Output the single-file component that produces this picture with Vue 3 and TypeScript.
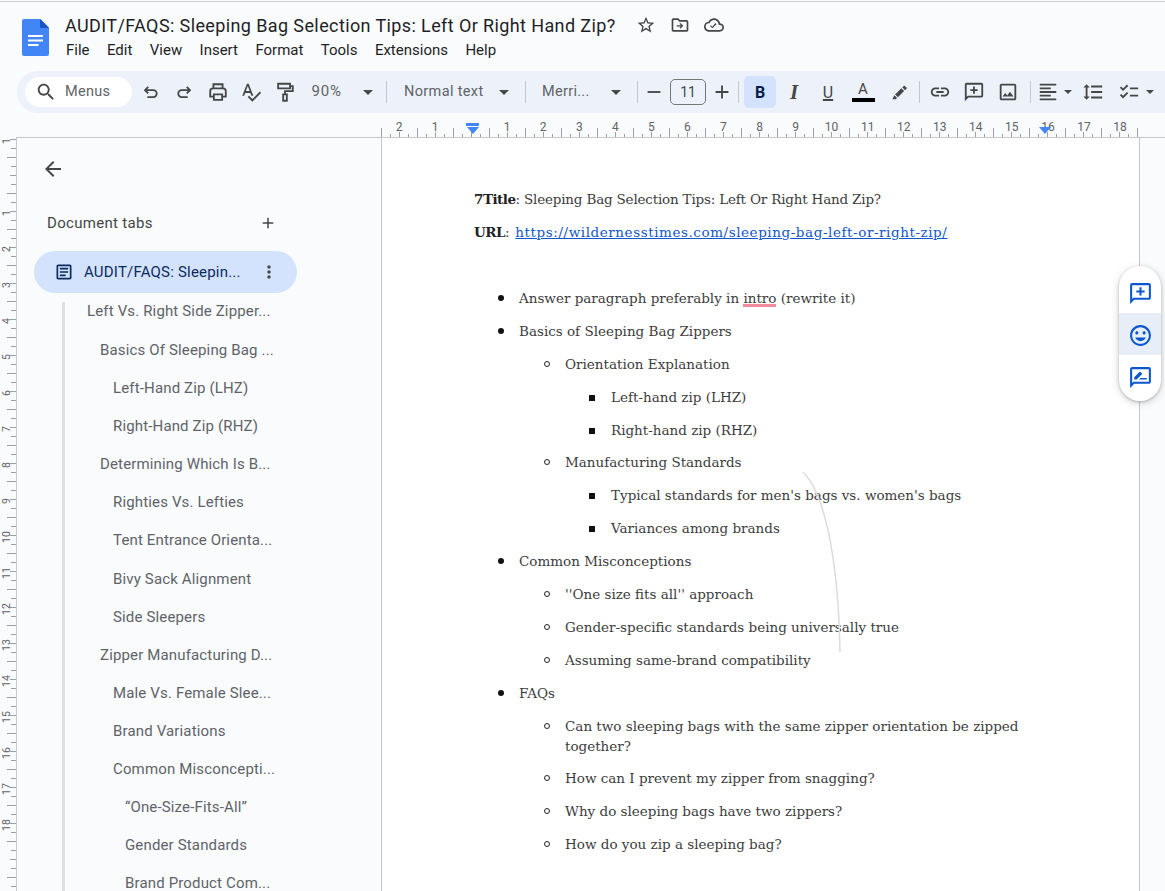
<script setup lang="ts">
interface TabItem { label: string; level: number }

const menus: string[] = ['File', 'Edit', 'View', 'Insert', 'Format', 'Tools', 'Extensions', 'Help']

const tabs: TabItem[] = [
  { label: 'Left Vs. Right Side Zipper...', level: 0 },
  { label: 'Basics Of Sleeping Bag ...', level: 1 },
  { label: 'Left-Hand Zip (LHZ)', level: 2 },
  { label: 'Right-Hand Zip (RHZ)', level: 2 },
  { label: 'Determining Which Is B...', level: 1 },
  { label: 'Righties Vs. Lefties', level: 2 },
  { label: 'Tent Entrance Orienta...', level: 2 },
  { label: 'Bivy Sack Alignment', level: 2 },
  { label: 'Side Sleepers', level: 2 },
  { label: 'Zipper Manufacturing D...', level: 1 },
  { label: 'Male Vs. Female Slee...', level: 2 },
  { label: 'Brand Variations', level: 2 },
  { label: 'Common Misconcepti...', level: 2 },
  { label: '“One-Size-Fits-All”', level: 3 },
  { label: 'Gender Standards', level: 3 },
  { label: 'Brand Product Com...', level: 3 },
]

const outline: { text: string; level: number }[] = [
  { text: 'Basics of Sleeping Bag Zippers', level: 1 },
  { text: 'Orientation Explanation', level: 2 },
  { text: 'Left-hand zip (LHZ)', level: 3 },
  { text: 'Right-hand zip (RHZ)', level: 3 },
  { text: 'Manufacturing Standards', level: 2 },
  { text: "Typical standards for men's bags vs. women's bags", level: 3 },
  { text: 'Variances among brands', level: 3 },
  { text: 'Common Misconceptions', level: 1 },
  { text: "''One size fits all'' approach", level: 2 },
  { text: 'Gender-specific standards being universally true', level: 2 },
  { text: 'Assuming same-brand compatibility', level: 2 },
  { text: 'FAQs', level: 1 },
  { text: 'Can two sleeping bags with the same zipper orientation be zipped together?', level: 2 },
  { text: 'How can I prevent my zipper from snagging?', level: 2 },
  { text: 'Why do sleeping bags have two zippers?', level: 2 },
  { text: 'How do you zip a sleeping bag?', level: 2 },
]

const hTicks = Array.from({ length: 85 }, (_, i) => ({
  x: 0.5 + i * 9,
  h: i % 4 === 0 ? 9 : i % 4 === 2 ? 5 : 3,
}))
const hNums = Array.from({ length: 21 }, (_, i) => ({ n: Math.abs(i - 2), x: 18 + i * 36.05 })).filter(
  (v) => v.n !== 0,
)
const vTicks = Array.from({ length: 90 }, (_, i) => ({
  y: 1.5 + i * 9,
  w: i % 4 === 2 ? 9 : i % 4 === 0 ? 6 : 5,
}))
const vNums = Array.from({ length: 20 }, (_, i) => ({ n: Math.abs(i - 1), y: 3 + i * 36 })).filter(
  (v) => v.n !== 0,
)
</script>

<template>
  <div class="app">
    <header class="head">
      <svg class="logo" viewBox="0 0 27 37" width="27" height="37">
        <path d="M2 0h16.500l8.500 8.500v26.500a2 2 0 0 1-2 2h-23a2 2 0 0 1-2-2v-33a2 2 0 0 1 2-2z" fill="#4285f4" />
        <path d="M18 0l9 9h-9z" fill="#1a56c4" />
        <path d="M6 16h15v2H6zM6 20.500h15v2H6zM6 25h10.500v2H6z" fill="#fff" />
      </svg>
      <div class="head-text">
        <div class="title-row">
          <span class="doc-title">AUDIT/FAQS: Sleeping Bag Selection Tips: Left Or Right Hand Zip?</span>
          <svg class="ti" viewBox="0 0 24 24"><path d="M22 9.240l-7.190-.62L12 2 9.190 8.630 2 9.240l5.460 4.730L5.820 21 12 17.270 18.180 21l-1.630-7.030L22 9.240zM12 15.400l-3.760 2.270 1-4.280-3.320-2.880 4.380-.38L12 6.100l1.710 4.040 4.380.38-3.320 2.880 1 4.280L12 15.400z" /></svg>
          <svg class="ti" viewBox="0 0 24 24"><path d="M20 6h-8l-2-2H4c-1.100 0-2 .9-2 2v12c0 1.100.9 2 2 2h16c1.100 0 2-.9 2-2V8c0-1.100-.9-2-2-2zm0 12H4V6h5.170l2 2H20v10z" /><path d="M12.500 9.500l-1.100 1.100 1.600 1.600H8v1.600h5l-1.600 1.600 1.100 1.100 3.500-3.500z" /></svg>
          <svg class="ti" viewBox="0 0 24 24"><path d="M19.350 10.040C18.670 6.590 15.640 4 12 4 9.110 4 6.600 5.640 5.350 8.040 2.340 8.360 0 10.910 0 14c0 3.310 2.690 6 6 6h13c2.760 0 5-2.240 5-5 0-2.640-2.050-4.780-4.650-4.960zM19 18H6c-2.210 0-4-1.790-4-4 0-2.050 1.530-3.760 3.560-3.970l1.070-.11.5-.95C8.080 7.140 9.940 6 12 6c2.620 0 4.880 1.860 5.390 4.430l.3 1.500 1.530.11c1.560.1 2.780 1.410 2.780 2.960 0 1.650-1.350 3-3 3zm-9-3.820l-2.090-2.090L7.500 13.500 10 16l5.010-5.010-1.410-1.410z" /></svg>
        </div>
        <nav class="menu">
          <span v-for="m in menus" :key="m">{{ m }}</span>
        </nav>
      </div>
    </header>

    <div class="toolbar">
      <div class="pill">
        <svg class="ic" viewBox="0 0 24 24"><path d="M15.500 14h-.79l-.28-.27C15.410 12.590 16 11.110 16 9.500 16 5.910 13.090 3 9.500 3S3 5.910 3 9.500 5.910 16 9.500 16c1.610 0 3.090-.59 4.230-1.570l.27.28v.79l5 4.990L20.490 19l-4.990-5zm-6 0C7.010 14 5 11.990 5 9.500S7.010 5 9.500 5 14 7.010 14 9.500 11.990 14 9.500 14z" /></svg>
        <span>Menus</span>
      </div>
      <button class="tb hist first"><svg class="ic stroked" viewBox="0 0 24 24"><path d="M9 6.500L5.500 10 9 13.500M5.500 10h9a3.750 3.750 0 0 1 0 7.500H8" /></svg></button>
      <button class="tb hist"><svg class="ic stroked" viewBox="0 0 24 24"><path d="M15 6.500l3.500 3.500-3.500 3.500M18.500 10h-9a3.750 3.750 0 0 0 0 7.500H16" /></svg></button>
      <button class="tb hist"><svg class="ic stroked" viewBox="0 0 24 24"><path d="M7 8V3.500h10V8M7 17H3.500v-6a3 3 0 0 1 3-3h11a3 3 0 0 1 3 3v6H17M7.500 14.500h9v6h-9z" /></svg></button>
      <button class="tb hist"><svg class="ic" viewBox="0 0 24 24"><path d="M12.450 16h2.090L9.430 3H7.570L2.460 16h2.090l1.120-3h5.640l1.140 3zm-6.020-5L8.500 5.480 10.570 11H6.430zm15.160.59l-8.090 8.090L9.830 16l-1.410 1.410 5.090 5.090L23 13l-1.410-1.410z" /></svg></button>
      <button class="tb hist"><svg class="ic stroked" viewBox="0 0 24 24"><path d="M4.500 3h13v5h-13zM17.500 5.500h3v5.500H12v3.500M10 14.500h4v7h-4z" /></svg></button>
      <span class="drop zoom"><span>90%</span><i class="caret"></i></span>
      <span class="sep"></span>
      <span class="drop style"><span>Normal text</span><i class="caret"></i></span>
      <span class="sep"></span>
      <span class="drop font"><span>Merri...</span><i class="caret"></i></span>
      <span class="sep"></span>
      <button class="sz"><svg class="ic" viewBox="0 0 24 24"><path d="M5 11h14v2H5z" /></svg></button>
      <span class="size-box">11</span>
      <button class="sz"><svg class="ic" viewBox="0 0 24 24"><path d="M19 13h-6v6h-2v-6H5v-2h6V5h2v6h6v2z" /></svg></button>
      <span class="sep tight"></span>
      <button class="bold">B</button>
      <button class="fmt italic">I</button>
      <button class="fmt under"><span>U</span></button>
      <button class="fmt color"><span class="color-a">A</span><i class="color-bar"></i></button>
      <button class="tb pen"><svg class="ic pen-ic" viewBox="0 0 24 24"><path d="M6.500 14.500l7.800-7.800 3.500 3.500-7.800 7.800-3.500-3.500zM15.500 5.500l1.800-1.800a1 1 0 0 1 1.400 0l2.100 2.100a1 1 0 0 1 0 1.400L19 9l-3.500-3.500zM5.500 15.500l3.500 3.500-2 1.500H3z" /></svg></button>
      <span class="sep after-pen"></span>
      <button class="tb link-btn"><svg class="ic" viewBox="0 0 24 24"><path d="M3.900 12c0-1.710 1.390-3.100 3.100-3.100h4V7H7c-2.760 0-5 2.240-5 5s2.240 5 5 5h4v-1.900H7c-1.710 0-3.100-1.390-3.100-3.100zM8 13h8v-2H8v2zm9-6h-4v1.900h4c1.710 0 3.100 1.390 3.100 3.100s-1.390 3.100-3.100 3.100h-4V17h4c2.760 0 5-2.240 5-5s-2.240-5-5-5z" /></svg></button>
      <button class="tb"><svg class="ic" viewBox="0 0 24 24"><path d="M20 2H4c-1.100 0-2 .9-2 2v18l4-4h14c1.100 0 2-.9 2-2V4c0-1.100-.9-2-2-2zm0 14H5.170L4 17.170V4h16v12z" /><path d="M11 6h2v3h3v2h-3v3h-2v-3H8V9h3z" /></svg></button>
      <button class="tb"><svg class="ic" viewBox="0 0 24 24"><path d="M19 5v14H5V5h14m0-2H5c-1.100 0-2 .9-2 2v14c0 1.100.9 2 2 2h14c1.100 0 2-.9 2-2V5c0-1.100-.9-2-2-2zm-4.860 8.860l-3 3.870L9 13.140 6 17h12l-3.860-5.140z" /></svg></button>
      <span class="sep after-img"></span>
      <button class="tb align"><svg class="ic" viewBox="0 0 24 24"><path d="M15 15H3v2h12v-2zm0-8H3v2h12V7zM3 13h18v-2H3v2zm0 8h18v-2H3v2zM3 3v2h18V3H3z" /></svg><i class="caret small"></i></button>
      <button class="tb spacing"><svg class="ic" viewBox="0 0 24 24"><path d="M6 7h2.500L5 3.500 1.500 7H4v10H1.500L5 20.500 8.500 17H6V7zm4-2v2h12V5H10zm0 14h12v-2H10v2zm0-6h12v-2H10v2z" /></svg></button>
      <button class="tb check"><svg class="ic" viewBox="0 0 24 24"><path d="M22 7h-9v2h9V7zm0 8h-9v2h9v-2zM5.540 11L2 7.460l1.410-1.410 2.120 2.120 4.240-4.240 1.410 1.410L5.540 11zm0 8L2 15.460l1.410-1.410 2.120 2.120 4.240-4.240 1.410 1.410L5.540 19z" /></svg><i class="caret small"></i></button>
    </div>

    <div class="ruler-h">
      <svg class="ruler-svg" width="757" height="24" viewBox="0 0 757 24">
        <line v-for="t in hTicks" :key="t.x" :x1="t.x" :x2="t.x" y1="24" :y2="24 - t.h" stroke="#9aa0a6" />
        <text v-for="n in hNums" :key="'n' + n.x" :x="n.x" y="18" class="num" text-anchor="middle">{{ n.n }}</text>
      </svg>
      <span class="indent-bar"></span>
      <span class="indent-tri left"></span>
      <span class="indent-tri right"></span>
    </div>

    <div class="body">
      <div class="ruler-v">
        <svg width="16" height="754" viewBox="0 0 16 754">
          <line v-for="t in vTicks" :key="t.y" :y1="t.y" :y2="t.y" x1="16" :x2="16 - t.w" stroke="#9aa0a6" />
          <text v-for="n in vNums" :key="n.y" class="num vnum" text-anchor="middle" :transform="`translate(10 ${n.y}) rotate(-90)`">{{ n.n }}</text>
        </svg>
      </div>

      <aside class="side">
        <svg class="back" viewBox="0 0 24 24"><path d="M20 11H7.830l5.590-5.590L12 4l-8 8 8 8 1.410-1.410L7.830 13H20v-2z" /></svg>
        <div class="tabs-head">
          <span>Document tabs</span>
          <svg class="plus" viewBox="0 0 24 24"><path d="M19 13h-6v6h-2v-6H5v-2h6V5h2v6h6v2z" /></svg>
        </div>
        <div class="tab-active">
          <svg class="doc-ic" viewBox="0 0 24 24"><path d="M19 3H5c-1.100 0-2 .9-2 2v14c0 1.100.9 2 2 2h14c1.100 0 2-.9 2-2V5c0-1.100-.9-2-2-2zm0 16H5V5h14v14zM7 7h10v2H7zM7 11h10v2H7zM7 15h7v2H7z" /></svg>
          <span class="tab-name">AUDIT/FAQS: Sleepin...</span>
          <svg class="dots" viewBox="0 0 24 24"><path d="M12 8c1.100 0 2-.9 2-2s-.9-2-2-2-2 .9-2 2 .9 2 2 2zm0 2c-1.100 0-2 .9-2 2s.9 2 2 2 2-.9 2-2-.9-2-2-2zm0 6c-1.100 0-2 .9-2 2s.9 2 2 2 2-.9 2-2-.9-2-2-2z" /></svg>
        </div>
        <ul class="tree">
          <li v-for="t in tabs" :key="t.label" :class="'lvl' + t.level">{{ t.label }}</li>
        </ul>
      </aside>

      <main class="page">
        <p class="line head-line"><b>7Title</b>: Sleeping Bag Selection Tips: Left Or Right Hand Zip?</p>
        <p class="line"><b>URL</b>: <a class="link">https://wildernesstimes.com/sleeping-bag-left-or-right-zip/</a></p>
        <p class="line blank">&nbsp;</p>
        <div class="li l1"><span>Answer paragraph preferably in <span class="err">intro</span> (rewrite it)</span></div>
        <div v-for="o in outline" :key="o.text" class="li" :class="'l' + o.level"><span>{{ o.text }}</span></div>
        <svg class="stray" width="44" height="190" viewBox="0 0 44 190">
          <path d="M2 2C22 22 37 80 39 182" fill="none" stroke="#dcdcdc" stroke-width="1.500" />
        </svg>
      </main>

      <div class="right-gutter"></div>

      <div class="float">
        <button class="fbtn"><svg viewBox="0 0 24 24"><path d="M20 2H4c-1.100 0-2 .9-2 2v18l4-4h14c1.100 0 2-.9 2-2V4c0-1.100-.9-2-2-2zm0 14H5.170L4 17.170V4h16v12z" /><path d="M11 6h2v3h3v2h-3v3h-2v-3H8V9h3z" /></svg></button>
        <button class="fbtn on"><svg viewBox="0 0 24 24"><path d="M11.990 2C6.470 2 2 6.480 2 12s4.470 10 9.990 10C17.520 22 22 17.520 22 12S17.520 2 11.990 2zM12 20c-4.420 0-8-3.580-8-8s3.580-8 8-8 8 3.580 8 8-3.580 8-8 8zm3.500-9c.83 0 1.500-.67 1.500-1.500S16.330 8 15.500 8 14 8.670 14 9.500s.67 1.500 1.500 1.500zm-7 0c.83 0 1.500-.67 1.500-1.500S9.330 8 8.500 8 7 8.670 7 9.500 7.670 11 8.500 11zm3.500 6.500c2.330 0 4.310-1.460 5.110-3.500H6.890c.8 2.040 2.780 3.500 5.110 3.500z" /></svg></button>
        <button class="fbtn"><svg viewBox="0 0 24 24"><path d="M20 2H4c-1.100 0-2 .9-2 2v18l4-4h14c1.100 0 2-.9 2-2V4c0-1.100-.9-2-2-2zm0 14H5.170L4 17.170V4h16v12z" /><path d="M6 14v-2.300l5.500-5.500 2.300 2.300L8.300 14H6zM12 12.500h6V14h-7.500z" /></svg></button>
      </div>
    </div>
  </div>
</template>

<style>
html, body { margin: 0; padding: 0; background: #f9fbfd; overflow: hidden; }
</style>

<style scoped>
.app {
  width: 1165px;
  height: 890px;
  margin-top: 1px;
  overflow: hidden;
  display: flex;
  flex-direction: column;
  background: #f9fbfd;
  font-family: Roboto, "Liberation Sans", sans-serif;
  color: #444746;
  box-sizing: border-box;
  border-top: 1px solid #d0d0d0;
}
button { border: 0; background: none; padding: 0; margin: 0; font: inherit; color: inherit; }

.head { height: 69px; display: flex; box-sizing: border-box; padding: 17px 0 0 22px; flex: none; }
.logo { flex: none; }
.head-text { margin-left: 16px; margin-top: -7px; }
.title-row { display: flex; align-items: center; height: 24px; margin-top: 1px; }
.doc-title { font-size: 18px; color: #1f1f1f; letter-spacing: 0.39px; }
.ti { width: 20px; height: 20px; fill: #444746; margin-left: 14px; flex: none; }
.ti:first-of-type { margin-left: 20px; }
.menu { display: flex; gap: 17.400px; font-size: 15px; color: #1f1f1f; margin-top: 4px; line-height: 18px; padding-left: 1px; }

.toolbar {
  flex: none;
  height: 42px;
  margin-left: 17px;
  background: #edf2fa;
  border-radius: 21px 0 0 21px;
  display: flex;
  align-items: center;
  padding-left: 8px;
  white-space: nowrap;
}
.pill {
  width: 107px; height: 30px; border-radius: 15px; background: #fff; flex: none;
  display: flex; align-items: center; box-sizing: border-box; padding-left: 10px;
  font-size: 14.500px; color: #5f6368; letter-spacing: 0.3px;
}
.pill span { margin-left: 8px; padding-bottom: 2px; }
.ic { width: 22px; height: 22px; fill: #444746; flex: none; }
.ic.stroked { fill: none; stroke: #444746; stroke-width: 2; }
.ic.pen-ic { width: 19px; height: 19px; }
.tb { width: 34px; height: 30px; display: flex; align-items: center; justify-content: center; flex: none; }
.tb.hist { width: 33.500px; }
.tb.first { margin-left: 2px; }
.drop { display: flex; align-items: center; justify-content: space-between; flex: none; font-size: 14.500px; color: #5f6368; letter-spacing: 0.3px; box-sizing: border-box; }
.drop span { padding-bottom: 2px; }
.zoom { width: 84.500px; padding: 0 13px 0 10px; font-size: 15px; letter-spacing: 0.8px; }
.style { width: 138px; padding: 0 16px 0 17px; letter-spacing: 0.35px; }
.font { width: 111px; padding: 0 16px 0 16px; }
.caret { width: 0; height: 0; border: 5px solid transparent; border-top: 5px solid #444746; border-bottom: 0; flex: none; display: block; }
.caret.small { border-width: 4.500px 4.500px 0; margin-left: 5px; }
.sep { width: 1px; height: 22px; background: #c7c7c7; flex: none; }
.sz { width: 32px; height: 30px; display: flex; align-items: center; justify-content: center; flex: none; }
.size-box { width: 36px; height: 26px; box-sizing: border-box; border: 1px solid #747775; border-radius: 5px; text-align: center; line-height: 24px; font-size: 14px; color: #444746; flex: none; }
.sep.tight { margin: 0 5px 0 0; }
.bold { width: 32px; height: 32px; border-radius: 5px; background: #d3e3fd; color: #041e49; font-weight: 700; font-size: 16px; flex: none; }
.fmt { width: 34px; height: 30px; flex: none; font-size: 17px; display: flex; flex-direction: column; align-items: center; justify-content: center; color: #444746; }
.italic { font-style: italic; font-weight: 700; font-family: "Liberation Serif", serif; font-size: 21px; margin-left: 1px; }
.under span { text-decoration: underline; text-underline-offset: 1px; font-size: 16px; text-decoration-thickness: 1.500px; }
.color { font-size: 15px; margin-left: 1px; }
.color-a { line-height: 14px; }
.color-bar { display: block; width: 23px; height: 4px; background: #000; margin-top: 2px; }
.pen { margin-left: 2px; }
.after-pen { margin-left: 3px; }
.link-btn { margin-left: 3px; }
.after-img { margin-left: 5px; }
.align { width: 36px; margin-left: 5px; }
.spacing { width: 32px; margin-left: 5px; }
.check { width: 38px; margin-left: 8px; }
.check .caret.small { margin-left: 6px; }

.ruler-h { flex: none; height: 24px; position: relative; border-bottom: 1px solid #c7c7c7; margin-left: 16px; }
.ruler-svg { position: absolute; left: 365px; top: 0; display: block; }
.num { font-size: 12px; fill: #5f6368; font-family: Roboto, sans-serif; }
.vnum { font-size: 10.500px; }
.indent-bar { position: absolute; left: 450px; top: 10px; width: 13px; height: 3px; background: #4285f4; }
.indent-tri { position: absolute; top: 14px; width: 0; height: 0; border: 6px solid transparent; border-top: 7px solid #4285f4; border-bottom: 0; }
.indent-tri.left { left: 450.500px; }
.indent-tri.right { left: 1023px; }

.body { flex: 1; min-height: 0; display: flex; position: relative; overflow: hidden; }
.ruler-v { width: 16px; flex: none; }
.ruler-v svg { display: block; }

.side { width: 366px; flex: none; box-sizing: border-box; border-right: 1px solid #c7c7c7; border-left: 1px solid #c7c7c7; overflow: hidden; }
.back { width: 24px; height: 24px; fill: #444746; display: block; margin: 19px 0 0 24px; }
.tabs-head { display: flex; align-items: center; justify-content: space-between; margin: 32px 0 0 30px; width: 230px; font-size: 15px; color: #444746; height: 20px; letter-spacing: 0.3px; }
.plus { width: 18px; height: 18px; fill: #444746; }
.tab-active {
  width: 263px; height: 42px; margin: 18px 0 0 17px; border-radius: 21px; background: #d3e3fd; color: #0b2a5c;
  display: flex; align-items: center; box-sizing: border-box; padding-left: 20px; font-size: 15px; letter-spacing: 0.2px;
}
.doc-ic { width: 20px; height: 20px; fill: #0b2a5c; flex: none; }
.tab-name { margin-left: 10px; width: 175px; flex: none; white-space: nowrap; }
.dots { width: 20px; height: 20px; fill: #444746; flex: none; }
.tree { list-style: none; margin: 9px 0 0 45px; padding: 0; border-left: 3px solid #e0e0e0; font-size: 15px; color: #5f6368; letter-spacing: 0.15px; }
.tree li { height: 38.100px; line-height: 18px; white-space: nowrap; box-sizing: border-box; }
.tree li:first-child { height: 39px; }
.lvl0 { padding-left: 22px; }
.lvl1 { padding-left: 35px; }
.lvl2 { padding-left: 48px; }
.lvl3 { padding-left: 60px; }

.page {
  width: 758px; flex: none; background: #fff; box-sizing: border-box; border-right: 1px solid #c7c7c7;
  padding: 51px 0 0 92px; position: relative; overflow: hidden;
  font-family: "DejaVu Serif", serif; font-size: 13.500px; color: #3c3c3c; line-height: 20px;
}
.line { margin: 0 0 13px; white-space: nowrap; }
.line b { color: #222; letter-spacing: -0.5px; }
.head-line { letter-spacing: -0.19px; }
.link { color: #1155cc; text-decoration: underline; letter-spacing: 0.57px; margin-left: 1.500px; }
.err { position: relative; }
.err::after { content: ""; position: absolute; left: 0; right: 0; bottom: -1px; height: 3px; background: #f28b9a; }
.li { position: relative; margin-bottom: 12.900px; width: 571px; box-sizing: border-box; }
.li::before { content: ""; position: absolute; }
.l1 { padding-left: 45px; }
.l1::before { left: 24px; top: 7px; width: 6px; height: 6px; border-radius: 50%; background: #111; }
.l2 { padding-left: 91px; }
.l2::before { left: 70px; top: 7px; width: 4px; height: 4px; border: 1px solid #222; border-radius: 50%; }
.l3 { padding-left: 137px; }
.l3::before { left: 115px; top: 8px; width: 6px; height: 6px; background: #111; }
.stray { position: absolute; left: 419px; top: 332px; pointer-events: none; }

.right-gutter { flex: 1; }

.float {
  position: absolute; left: 1119px; top: 128px; width: 42px; height: 135px; box-sizing: border-box; border-radius: 21px; background: #fff;
  box-shadow: 0 1px 3px rgba(60, 64, 67, .3), 0 2px 8px rgba(60, 64, 67, .2);
  overflow: hidden; display: flex; flex-direction: column; padding-top: 5px;
}
.fbtn { width: 42px; height: 42px; box-sizing: border-box; padding-top: 3px; display: flex; align-items: center; justify-content: center; flex: none; }
.fbtn.on { background: #e8eef8; }
.fbtn svg { width: 25px; height: 25px; fill: #0b57d0; }
</style>
